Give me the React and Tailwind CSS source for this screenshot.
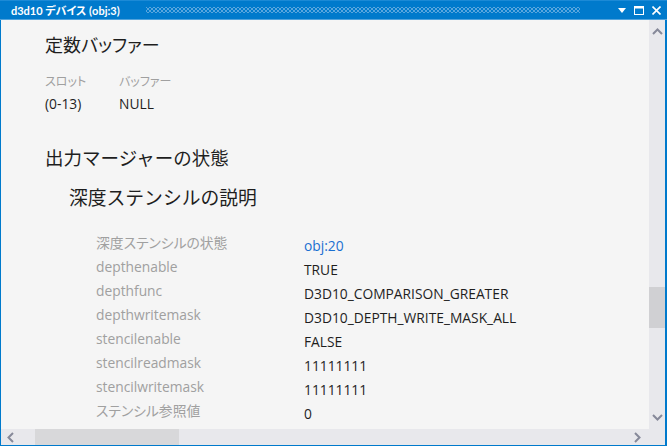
const font = { fontFamily: '"Open Sans", "Noto Sans CJK JP", sans-serif' };

const rows = [
  ['深度ステンシルの状態', 'obj:20', true],
  ['depthenable', 'TRUE'],
  ['depthfunc', 'D3D10_COMPARISON_GREATER'],
  ['depthwritemask', 'D3D10_DEPTH_WRITE_MASK_ALL'],
  ['stencilenable', 'FALSE'],
  ['stencilreadmask', '11111111'],
  ['stencilwritemask', '11111111'],
  ['ステンシル参照値', '0'],
];

function Dots() {
  return (
    <div
      className="flex-1 h-[6px] opacity-70"
      style={{
        backgroundImage:
          'radial-gradient(circle, #7fb9e6 0.8px, transparent 1px), radial-gradient(circle, #7fb9e6 0.8px, transparent 1px)',
        backgroundSize: '4px 4px, 4px 4px',
        backgroundPosition: '0 0, 2px 2px',
      }}
    />
  );
}

export default function App() {
  return (
    <div
      className="w-[667px] h-[446px] flex flex-col bg-[#007acc] overflow-hidden"
      style={font}
    >
      <div className="h-[20px] flex items-center pl-[11px] pr-[6px] border-t border-[#1c8ad6] border-b border-b-[#52a3dc] shrink-0">
        <span className="text-white text-[11px] font-bold leading-none whitespace-nowrap [font-feature-settings:'palt'] font-['Lato','Noto_Sans_CJK_JP',sans-serif]">d3d10 デバイス (obj:3)</span>
        <div className="w-[26px]" />
        <Dots />
        <div className="w-[38px]" />
        <div className="flex items-center gap-[8px] text-white">
          <svg width="8" height="5" viewBox="0 0 8 5"><path d="M0 0h8L4 5z" fill="#fff" /></svg>
          <svg width="10" height="9" viewBox="0 0 10 9"><rect x="0.5" y="0.5" width="9" height="8" fill="none" stroke="#fff" /><rect x="0" y="0" width="10" height="2.5" fill="#fff" /></svg>
          <svg width="9" height="9" viewBox="0 0 9 9"><path d="M0.5 0.5l8 8M8.5 0.5l-8 8" stroke="#fff" strokeWidth="1.6" /></svg>
        </div>
      </div>

      <div className="flex-1 flex flex-col ml-px mr-[2px] mb-[1px] min-h-0 bg-[#e8e8ec]">
        <div className="flex-1 flex min-h-0">
          <div className="flex-1 bg-[#f5f5f5] overflow-hidden pl-[44px] pt-[11px]">
            <div className="text-[18px] leading-[28px] text-[#1e1e1e] [font-feature-settings:'palt']">定数バッファー</div>
            <div className="flex mt-[15px] text-[12px] leading-[16px] text-[#a0a0a0] [font-feature-settings:'palt']">
              <span className="w-[74px]">スロット</span>
              <span>バッファー</span>
            </div>
            <div className="flex mt-[5px] text-[13.8px] leading-[18px] text-[#1e1e1e]">
              <span className="w-[74px]">(0-13)</span>
              <span>NULL</span>
            </div>
            <div className="mt-[31px] text-[18.5px] leading-[28px] text-[#1e1e1e]">出力マージャーの状態</div>
            <div className="mt-[12px] ml-[24px] text-[18.8px] leading-[28px] text-[#1e1e1e]">深度ステンシルの説明</div>
            <div className="mt-[22px] ml-[51px] flex flex-col">
              {rows.map(([k, v, link]) => (
                <div key={k} className="flex h-[24px] whitespace-nowrap">
                  <span className="w-[208px] text-[#a0a0a0] text-[13.8px] leading-[18px] [font-feature-settings:'palt']">{k}</span>
                  <span className={(link ? 'text-[#1a6fd1]' : 'text-[#1e1e1e]') + ' text-[13.8px] leading-[18px] pt-[3px]'}>{v}</span>
                </div>
              ))}
            </div>
          </div>
          <div className="w-[16px] flex flex-col items-center bg-[#e8e8ec]">
            <svg className="mt-[8px]" width="11" height="7" viewBox="0 0 11 7"><path d="M1 6l4.5-4.5L10 6" fill="none" stroke="#868999" strokeWidth="2" /></svg>
            <div className="h-[252px]" />
            <div className="w-full h-[41px] bg-[#d0d0d3]" />
            <div className="flex-1" />
            <svg className="mb-[8px]" width="11" height="7" viewBox="0 0 11 7"><path d="M1 1l4.5 4.5L10 1" fill="none" stroke="#868999" strokeWidth="2" /></svg>
          </div>
        </div>
        <div className="h-[16px] flex items-center shrink-0">
          <svg className="ml-[6px]" width="7" height="11" viewBox="0 0 7 11"><path d="M6 1L1.5 5.5 6 10" fill="none" stroke="#868999" strokeWidth="2" /></svg>
          <div className="ml-[21px] w-[144px] h-full bg-[#d8d8da]" />
          <div className="flex-1" />
          <svg className="mr-[24px]" width="7" height="11" viewBox="0 0 7 11"><path d="M1 1l4.5 4.5L1 10" fill="none" stroke="#868999" strokeWidth="2" /></svg>
        </div>
      </div>
    </div>
  );
}
